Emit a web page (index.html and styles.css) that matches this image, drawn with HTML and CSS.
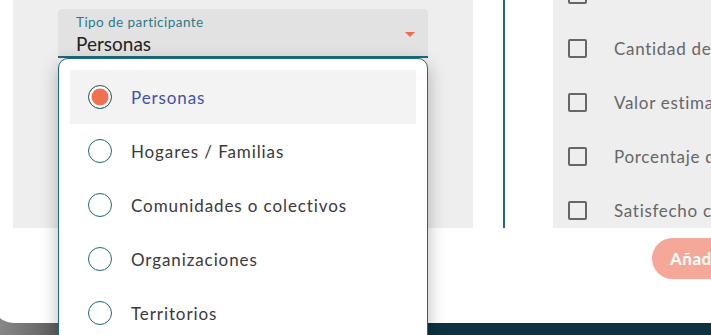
FILE: index.html
```html
<!DOCTYPE html>
<html lang="es">

<head>
    <meta charset="utf-8">
    <meta name="viewport" content="width=device-width, initial-scale=1">
    <title>Tipo de participante</title>
    <link rel="stylesheet" href="styles.css">
</head>

<body>
    <div class="modal">
        <div class="columns">
            <!-- Left column: participant type -->
            <div class="panel panel-left">
                <div class="select-field">
                    <span class="select-label">Tipo de participante</span>
                    <span class="select-value">Personas</span>
                    <span class="select-arrow"></span>
                </div>
            </div>

            <div class="divider"></div>

            <!-- Right column: indicators -->
            <div class="panel panel-right">
                <ul class="check-list">
                    <li><span class="checkbox"></span></li>
                    <li><span class="checkbox"></span>Cantidad de beneficiarios</li>
                    <li><span class="checkbox"></span>Valor estimado</li>
                    <li><span class="checkbox"></span>Porcentaje de avance</li>
                    <li><span class="checkbox"></span>Satisfecho con el servicio</li>
                </ul>
            </div>
        </div>

        <div class="modal-footer">
            <button class="btn-add" type="button">Añadir</button>
        </div>
    </div>

    <!-- Open dropdown menu -->
    <ul class="dropdown-menu">
        <li class="menu-item selected"><span class="radio"></span>Personas</li>
        <li class="menu-item"><span class="radio"></span>Hogares / Familias</li>
        <li class="menu-item"><span class="radio"></span>Comunidades o colectivos</li>
        <li class="menu-item"><span class="radio"></span>Organizaciones</li>
        <li class="menu-item"><span class="radio"></span>Territorios</li>
    </ul>
</body>

</html>
```

FILE: styles.css
```css
* {
    margin: 0;
    padding: 0;
    box-sizing: border-box;
}

html,
body {
    height: 100%;
    overflow: hidden;
}

body {
    position: relative;
    font-family: Lato, 'Open Sans', sans-serif;
    background: linear-gradient(to right, #878787 0, #5e5e5e 58px, #0d3340 58px);
}

/* Modal */
.modal {
    width: 820px;
    height: 323px;
    margin-left: -8px;
    padding-left: 21px;
    background: #fff;
    border-bottom-left-radius: 22px;
}

.columns {
    display: flex;
    height: 228px;
}

.panel {
    background: #eeeeee;
}

.panel-left {
    width: 460px;
    padding: 9px 0 0 45px;
}

.divider {
    width: 2px;
    margin-left: 30px;
    background: #1d6a78;
}

.panel-right {
    flex: 1;
    margin-left: 48px;
    padding-left: 15px;
    overflow: hidden;
}

/* Select field */
.select-field {
    position: relative;
    display: flex;
    flex-direction: column;
    width: 370px;
    height: 49px;
    padding: 6px 18px 0;
    background: #e2e2e2;
    border-radius: 4px 4px 0 0;
    border-bottom: 2px solid #1d6a78;
}

.select-label {
    font-size: 13.5px;
    line-height: 15px;
    letter-spacing: 0.45px;
    color: #2b7a8a;
}

.select-value {
    margin-top: 2px;
    font-size: 19px;
    line-height: 23px;
    color: #222;
}

.select-arrow {
    position: absolute;
    right: 13px;
    top: 23px;
    border-left: 5px solid transparent;
    border-right: 5px solid transparent;
    border-top: 5px solid #f26b4a;
}

/* Checkbox list */
.check-list {
    list-style: none;
    margin-top: -33px;
}

.check-list li {
    display: flex;
    align-items: center;
    height: 54px;
    font-size: 17px;
    letter-spacing: 0.7px;
    color: #666;
    white-space: nowrap;
}

.checkbox {
    flex: none;
    width: 19px;
    height: 19px;
    margin-right: 27px;
    border: 2px solid #666;
    border-radius: 2px;
}

/* Footer */
.modal-footer {
    display: flex;
    padding: 10px 0 0 639px;
}

.btn-add {
    height: 41px;
    padding: 0 24px 0 18px;
    border: none;
    border-radius: 21px;
    background: #f5a898;
    color: #fff;
    font-family: inherit;
    font-size: 17px;
    font-weight: bold;
    letter-spacing: 0.5px;
}

/* Dropdown menu */
.dropdown-menu {
    position: absolute;
    left: 58px;
    top: 58px;
    width: 370px;
    height: 300px;
    padding: 11px 11px 0;
    list-style: none;
    background: #fff;
    border: 1px solid #1d6a78;
    border-radius: 10px 10px 0 0;
    box-shadow: 0 6px 18px rgba(0, 0, 0, 0.28);
}

.menu-item {
    display: flex;
    align-items: center;
    height: 54px;
    padding-left: 18px;
    font-size: 17px;
    letter-spacing: 0.9px;
    color: #3a3a3a;
}

.menu-item.selected {
    background: #f3f3f3;
    color: #3f51b5;
}

.radio {
    flex: none;
    width: 24px;
    height: 24px;
    margin-right: 19px;
    border: 1.5px solid #1d6a78;
    border-radius: 50%;
}

.menu-item.selected .radio {
    background: #f07050;
    box-shadow: inset 0 0 0 2.5px #fff;
}
```
